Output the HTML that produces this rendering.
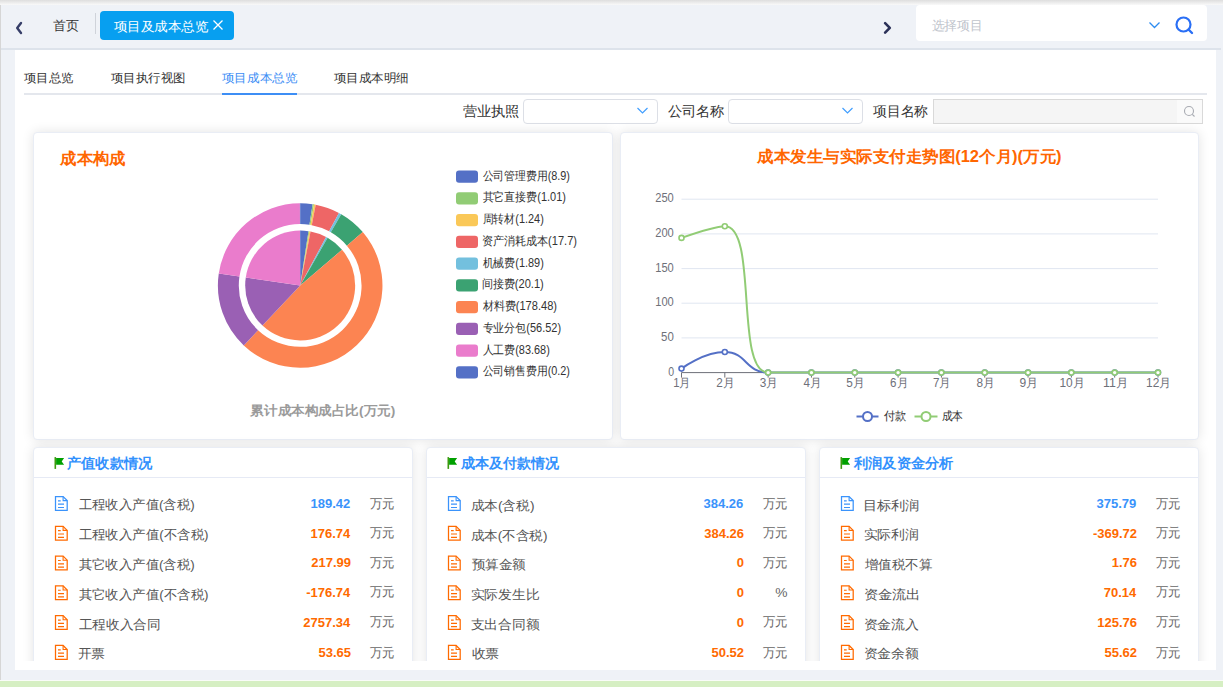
<!DOCTYPE html>
<html><head><meta charset="utf-8">
<style>
*{margin:0;padding:0;box-sizing:border-box}
html,body{width:1223px;height:687px;overflow:hidden;background:#eff2f7;font-family:"Liberation Sans",sans-serif;color:#333}
.abs{position:absolute}
#topshade{position:absolute;left:0;top:0;width:1223px;height:5px;background:linear-gradient(#dedede,#f9f9f9)}
#lborder{position:absolute;left:0;top:5px;width:1px;height:675px;background:#d6d6d6}
#hline{position:absolute;left:1px;top:48px;width:1220px;height:2px;background:#dde3eb}
#content{position:absolute;left:15px;top:50px;width:1201px;height:620px;background:#fff;overflow:hidden}
#clip{position:absolute;left:0;top:0;width:1201px;height:611px;overflow:hidden}
#green{position:absolute;left:0;top:681px;width:1223px;height:6px;background:#d6efc3}
#gline{position:absolute;left:0;top:680px;width:1223px;height:1px;background:#fafcf8}
.tab{position:absolute;top:11px;left:100px;width:134px;height:29px;background:#079ff0;border-radius:4px}
.charts{position:absolute;left:0;top:0}
.card{position:absolute;background:#fff;border:1px solid #e9edf5;border-radius:4px;box-shadow:0 0 12px rgba(0,0,0,0.11)}
.bcard{position:absolute;top:397px;width:380px;height:260px;background:#fff;border:1px solid #e9edf5;border-radius:4px;box-shadow:0 0 12px rgba(0,0,0,0.11)}
.bhead{position:absolute;left:0;top:0;width:378px;height:30px;border-bottom:1px solid #e6eaf5}
</style></head><body>
<div id="topshade"></div>
<div id="lborder"></div>
<div class="abs" style="left:95px;top:13px;width:1px;height:21px;background:#cfd3da"></div>
<div class="tab"></div>
<div class="abs" style="left:916px;top:5px;width:291px;height:36px;background:#fff;border-radius:4px"></div>
<div id="hline"></div>
<div id="content">
 <div class="abs" style="left:9px;top:43px;width:1183px;height:2px;background:#e4e7ed"></div>
 <div class="abs" style="left:207px;top:43px;width:75px;height:2px;background:#3d8ef5"></div>
 <div class="abs" style="left:508px;top:49px;width:135px;height:25px;border:1px solid #dcdfe6;border-radius:4px;background:#fff"></div>
 <div class="abs" style="left:713px;top:49px;width:135px;height:25px;border:1px solid #dcdfe6;border-radius:4px;background:#fff"></div>
 <div class="abs" style="left:918px;top:49px;width:270px;height:25px;border:1px solid #d9d9d9;background:#f5f5f5"></div>
 <div class="abs" style="left:1162px;top:50px;width:25px;height:23px;background:#fafafa"></div>
 <div id="clip">
 <div class="card" style="left:18px;top:82px;width:580px;height:308px"></div>
 <div class="card" style="left:605px;top:82px;width:579px;height:308px"></div>
 <div class="bcard" style="left:18px"><div class="bhead"></div></div>
 <div class="bcard" style="left:411px"><div class="bhead"></div></div>
 <div class="bcard" style="left:804px"><div class="bhead"></div></div>
 </div>
</div>
<svg class="charts" width="1223" height="687" viewBox="0 0 1223 687">
<defs><clipPath id="bc"><rect x="0" y="0" width="1223" height="661"/></clipPath></defs>
<g><path d="M300.20,285.50L300.20,230.50A55,55 0 0 1 308.49,231.13Z" fill="#5470c6"/>
<path d="M300.20,285.50L308.49,231.13A55,55 0 0 1 309.42,231.28Z" fill="#91cc75"/>
<path d="M300.20,285.50L309.42,231.28A55,55 0 0 1 310.56,231.48Z" fill="#fac858"/>
<path d="M300.20,285.50L310.56,231.48A55,55 0 0 1 326.10,236.98Z" fill="#ee6666"/>
<path d="M300.20,285.50L326.10,236.98A55,55 0 0 1 327.64,237.84Z" fill="#73c0de"/>
<path d="M300.20,285.50L327.64,237.84A55,55 0 0 1 342.02,249.78Z" fill="#3ba272"/>
<path d="M300.20,285.50L342.02,249.78A55,55 0 0 1 262.49,325.53Z" fill="#fc8452"/>
<path d="M300.20,285.50L262.49,325.53A55,55 0 0 1 245.78,277.54Z" fill="#9a60b4"/>
<path d="M300.20,285.50L245.78,277.54A55,55 0 0 1 300.01,230.50Z" fill="#ea7ccc"/>
<path d="M300.20,285.50L300.01,230.50A55,55 0 0 1 300.20,230.50Z" fill="#5470c6"/>
<path d="M300.20,203.20A82.3,82.3 0 0 1 312.60,204.14L309.45,224.80A61.4,61.4 0 0 0 300.20,224.10Z" fill="#5470c6"/>
<path d="M312.60,204.14A82.3,82.3 0 0 1 314.00,204.36L310.49,224.97A61.4,61.4 0 0 0 309.45,224.80Z" fill="#91cc75"/>
<path d="M314.00,204.36A82.3,82.3 0 0 1 315.70,204.67L311.77,225.20A61.4,61.4 0 0 0 310.49,224.97Z" fill="#fac858"/>
<path d="M315.70,204.67A82.3,82.3 0 0 1 338.95,212.90L329.11,231.33A61.4,61.4 0 0 0 311.77,225.20Z" fill="#ee6666"/>
<path d="M338.95,212.90A82.3,82.3 0 0 1 341.27,214.18L330.84,232.29A61.4,61.4 0 0 0 329.11,231.33Z" fill="#73c0de"/>
<path d="M341.27,214.18A82.3,82.3 0 0 1 362.78,232.05L346.89,245.63A61.4,61.4 0 0 0 330.84,232.29Z" fill="#3ba272"/>
<path d="M362.78,232.05A82.3,82.3 0 0 1 243.77,345.40L258.10,330.19A61.4,61.4 0 0 0 346.89,245.63Z" fill="#fc8452"/>
<path d="M243.77,345.40A82.3,82.3 0 0 1 218.77,273.58L239.45,276.61A61.4,61.4 0 0 0 258.10,330.19Z" fill="#9a60b4"/>
<path d="M218.77,273.58A82.3,82.3 0 0 1 299.92,203.20L299.99,224.10A61.4,61.4 0 0 0 239.45,276.61Z" fill="#ea7ccc"/>
<path d="M299.92,203.20A82.3,82.3 0 0 1 300.20,203.20L300.20,224.10A61.4,61.4 0 0 0 299.99,224.10Z" fill="#5470c6"/>
</g>
<rect x="456" y="170.60" width="22" height="12.2" rx="3" fill="#5470c6"/><rect x="456" y="192.35" width="22" height="12.2" rx="3" fill="#91cc75"/><rect x="456" y="214.10" width="22" height="12.2" rx="3" fill="#fac858"/><rect x="456" y="235.85" width="22" height="12.2" rx="3" fill="#ee6666"/><rect x="456" y="257.60" width="22" height="12.2" rx="3" fill="#73c0de"/><rect x="456" y="279.35" width="22" height="12.2" rx="3" fill="#3ba272"/><rect x="456" y="301.10" width="22" height="12.2" rx="3" fill="#fc8452"/><rect x="456" y="322.85" width="22" height="12.2" rx="3" fill="#9a60b4"/><rect x="456" y="344.60" width="22" height="12.2" rx="3" fill="#ea7ccc"/><rect x="456" y="366.35" width="22" height="12.2" rx="3" fill="#5470c6"/>
<line x1="681.5" x2="1158" y1="337.9" y2="337.9" stroke="#e0e6f1" stroke-width="1"/><line x1="681.5" x2="1158" y1="303.2" y2="303.2" stroke="#e0e6f1" stroke-width="1"/><line x1="681.5" x2="1158" y1="268.6" y2="268.6" stroke="#e0e6f1" stroke-width="1"/><line x1="681.5" x2="1158" y1="233.9" y2="233.9" stroke="#e0e6f1" stroke-width="1"/><line x1="681.5" x2="1158" y1="199.2" y2="199.2" stroke="#e0e6f1" stroke-width="1"/>
<line x1="681.5" x2="1158" y1="372.6" y2="372.6" stroke="#6e7079" stroke-width="1"/>
<line x1="681.50" x2="681.50" y1="372.6" y2="377.6" stroke="#6e7079"/><line x1="724.82" x2="724.82" y1="372.6" y2="377.6" stroke="#6e7079"/><line x1="768.14" x2="768.14" y1="372.6" y2="377.6" stroke="#6e7079"/><line x1="811.45" x2="811.45" y1="372.6" y2="377.6" stroke="#6e7079"/><line x1="854.77" x2="854.77" y1="372.6" y2="377.6" stroke="#6e7079"/><line x1="898.09" x2="898.09" y1="372.6" y2="377.6" stroke="#6e7079"/><line x1="941.41" x2="941.41" y1="372.6" y2="377.6" stroke="#6e7079"/><line x1="984.73" x2="984.73" y1="372.6" y2="377.6" stroke="#6e7079"/><line x1="1028.05" x2="1028.05" y1="372.6" y2="377.6" stroke="#6e7079"/><line x1="1071.36" x2="1071.36" y1="372.6" y2="377.6" stroke="#6e7079"/><line x1="1114.68" x2="1114.68" y1="372.6" y2="377.6" stroke="#6e7079"/><line x1="1158.00" x2="1158.00" y1="372.6" y2="377.6" stroke="#6e7079"/>
<path d="M681.50,368.58C681.50,368.58 703.52,352.07 724.82,352.07C746.84,352.07 745.38,372.60 768.14,372.60C788.70,372.60 789.80,372.60 811.45,372.60C833.11,372.60 833.11,372.60 854.77,372.60C876.43,372.60 876.43,372.60 898.09,372.60C919.75,372.60 919.75,372.60 941.41,372.60C963.07,372.60 963.07,372.60 984.73,372.60C1006.39,372.60 1006.39,372.60 1028.05,372.60C1049.70,372.60 1049.70,372.60 1071.36,372.60C1093.02,372.60 1093.02,372.60 1114.68,372.60C1136.34,372.60 1158.00,372.60 1158.00,372.60" fill="none" stroke="#5470c6" stroke-width="2"/>
<circle cx="681.50" cy="368.58" r="2.5" fill="#fff" stroke="#5470c6" stroke-width="1.6"/><circle cx="724.82" cy="352.07" r="2.5" fill="#fff" stroke="#5470c6" stroke-width="1.6"/><circle cx="768.14" cy="372.60" r="2.5" fill="#fff" stroke="#5470c6" stroke-width="1.6"/><circle cx="811.45" cy="372.60" r="2.5" fill="#fff" stroke="#5470c6" stroke-width="1.6"/><circle cx="854.77" cy="372.60" r="2.5" fill="#fff" stroke="#5470c6" stroke-width="1.6"/><circle cx="898.09" cy="372.60" r="2.5" fill="#fff" stroke="#5470c6" stroke-width="1.6"/><circle cx="941.41" cy="372.60" r="2.5" fill="#fff" stroke="#5470c6" stroke-width="1.6"/><circle cx="984.73" cy="372.60" r="2.5" fill="#fff" stroke="#5470c6" stroke-width="1.6"/><circle cx="1028.05" cy="372.60" r="2.5" fill="#fff" stroke="#5470c6" stroke-width="1.6"/><circle cx="1071.36" cy="372.60" r="2.5" fill="#fff" stroke="#5470c6" stroke-width="1.6"/><circle cx="1114.68" cy="372.60" r="2.5" fill="#fff" stroke="#5470c6" stroke-width="1.6"/><circle cx="1158.00" cy="372.60" r="2.5" fill="#fff" stroke="#5470c6" stroke-width="1.6"/>
<path d="M681.50,237.90C681.50,237.90 714.98,226.25 724.82,226.25C758.30,226.25 734.39,372.60 768.14,372.60C777.71,372.60 789.80,372.60 811.45,372.60C833.11,372.60 833.11,372.60 854.77,372.60C876.43,372.60 876.43,372.60 898.09,372.60C919.75,372.60 919.75,372.60 941.41,372.60C963.07,372.60 963.07,372.60 984.73,372.60C1006.39,372.60 1006.39,372.60 1028.05,372.60C1049.70,372.60 1049.70,372.60 1071.36,372.60C1093.02,372.60 1093.02,372.60 1114.68,372.60C1136.34,372.60 1158.00,372.60 1158.00,372.60" fill="none" stroke="#91cc75" stroke-width="2"/>
<circle cx="681.50" cy="237.90" r="2.5" fill="#fff" stroke="#91cc75" stroke-width="1.6"/><circle cx="724.82" cy="226.25" r="2.5" fill="#fff" stroke="#91cc75" stroke-width="1.6"/><circle cx="768.14" cy="372.60" r="2.5" fill="#fff" stroke="#91cc75" stroke-width="1.6"/><circle cx="811.45" cy="372.60" r="2.5" fill="#fff" stroke="#91cc75" stroke-width="1.6"/><circle cx="854.77" cy="372.60" r="2.5" fill="#fff" stroke="#91cc75" stroke-width="1.6"/><circle cx="898.09" cy="372.60" r="2.5" fill="#fff" stroke="#91cc75" stroke-width="1.6"/><circle cx="941.41" cy="372.60" r="2.5" fill="#fff" stroke="#91cc75" stroke-width="1.6"/><circle cx="984.73" cy="372.60" r="2.5" fill="#fff" stroke="#91cc75" stroke-width="1.6"/><circle cx="1028.05" cy="372.60" r="2.5" fill="#fff" stroke="#91cc75" stroke-width="1.6"/><circle cx="1071.36" cy="372.60" r="2.5" fill="#fff" stroke="#91cc75" stroke-width="1.6"/><circle cx="1114.68" cy="372.60" r="2.5" fill="#fff" stroke="#91cc75" stroke-width="1.6"/><circle cx="1158.00" cy="372.60" r="2.5" fill="#fff" stroke="#91cc75" stroke-width="1.6"/>
<line x1="856.5" x2="878.5" y1="416.5" y2="416.5" stroke="#5470c6" stroke-width="2"/><circle cx="867.5" cy="416.5" r="4.5" fill="#fff" stroke="#5470c6" stroke-width="2"/>
<line x1="914.5" x2="937.5" y1="416.5" y2="416.5" stroke="#91cc75" stroke-width="2"/><circle cx="926" cy="416.5" r="4.5" fill="#fff" stroke="#91cc75" stroke-width="2"/>
<path d="M213.5,20.5L222.5,29.5M222.5,20.5L213.5,29.5" stroke="#fff" stroke-width="1.3"/>
<path d="M21,23L17.2,28L21,33" fill="none" stroke="#363e68" stroke-width="2.4" stroke-linecap="round" stroke-linejoin="round"/>
<path d="M885.1,23.2L889.8,27.9L885.1,32.6" fill="none" stroke="#2b3158" stroke-width="2.6" stroke-linecap="round" stroke-linejoin="round"/>
<path d="M1149.5,22.5L1154.5,27.5L1159.5,22.5" fill="none" stroke="#2d8cf0" stroke-width="1.3"/>
<circle cx="1183.5" cy="24.5" r="7" fill="none" stroke="#2a6ff5" stroke-width="2.2"/><path d="M1188.5,29.5L1192,33" stroke="#2a6ff5" stroke-width="2.4" stroke-linecap="round"/>
<path d="M637.5,108L642.5,113L647.5,108" fill="none" stroke="#409eff" stroke-width="1.2"/>
<path d="M842.5,108L847.5,113L852.5,108" fill="none" stroke="#409eff" stroke-width="1.2"/>
<circle cx="1189" cy="111" r="4.5" fill="none" stroke="#a8abb2" stroke-width="1.1"/><path d="M1192.3,114.3L1194.5,116.5" stroke="#a8abb2" stroke-width="1.1"/>
<g font-family="Liberation Sans, sans-serif"><text x="53.24" y="30.06" font-size="13" fill="#333" font-weight="normal" textLength="25.96" lengthAdjust="spacingAndGlyphs">首页</text><text x="113.50" y="30.55" font-size="13" fill="#fff" font-weight="normal" textLength="95.00" lengthAdjust="spacingAndGlyphs">项目及成本总览</text><text x="931.50" y="29.81" font-size="13" fill="#c0c4cc" font-weight="normal" textLength="51.40" lengthAdjust="spacingAndGlyphs">选择项目</text><text x="23.98" y="81.56" font-size="12" fill="#333" font-weight="normal" textLength="49.52" lengthAdjust="spacingAndGlyphs">项目总览</text><text x="110.72" y="81.56" font-size="12" fill="#333" font-weight="normal" textLength="74.82" lengthAdjust="spacingAndGlyphs">项目执行视图</text><text x="221.76" y="81.56" font-size="12" fill="#3d8ef5" font-weight="normal" textLength="75.52" lengthAdjust="spacingAndGlyphs">项目成本总览</text><text x="333.72" y="81.56" font-size="12" fill="#333" font-weight="normal" textLength="75.30" lengthAdjust="spacingAndGlyphs">项目成本明细</text><text x="462.72" y="115.79" font-size="14" fill="#333" font-weight="normal" textLength="57.04" lengthAdjust="spacingAndGlyphs">营业执照</text><text x="667.72" y="115.59" font-size="14" fill="#333" font-weight="normal" textLength="57.04" lengthAdjust="spacingAndGlyphs">公司名称</text><text x="872.76" y="115.59" font-size="14" fill="#333" font-weight="normal" textLength="55.52" lengthAdjust="spacingAndGlyphs">项目名称</text><text x="60.24" y="164.48" font-size="16" fill="#ff6600" font-weight="bold" textLength="65.48" lengthAdjust="spacingAndGlyphs">成本构成</text><text x="757.24" y="161.59" font-size="16" fill="#ff6600" font-weight="bold" textLength="304.26" lengthAdjust="spacingAndGlyphs">成本发生与实际支付走势图(12个月)(万元)</text><text x="250.46" y="414.53" font-size="13" fill="#9a9a9a" font-weight="bold" textLength="144.78" lengthAdjust="spacingAndGlyphs">累计成本构成占比(万元)</text><text x="482.50" y="179.80" font-size="12" fill="#333" font-weight="normal" textLength="87.48" lengthAdjust="spacingAndGlyphs">公司管理费用(8.9)</text><text x="482.50" y="201.30" font-size="12" fill="#333" font-weight="normal" textLength="83.48" lengthAdjust="spacingAndGlyphs">其它直接费(1.01)</text><text x="482.50" y="223.30" font-size="12" fill="#333" font-weight="normal" textLength="61.30" lengthAdjust="spacingAndGlyphs">周转材(1.24)</text><text x="481.50" y="244.80" font-size="12" fill="#333" font-weight="normal" textLength="95.52" lengthAdjust="spacingAndGlyphs">资产消耗成本(17.7)</text><text x="482.50" y="266.80" font-size="12" fill="#333" font-weight="normal" textLength="61.30" lengthAdjust="spacingAndGlyphs">机械费(1.89)</text><text x="481.50" y="288.30" font-size="12" fill="#333" font-weight="normal" textLength="62.30" lengthAdjust="spacingAndGlyphs">间接费(20.1)</text><text x="482.50" y="310.30" font-size="12" fill="#333" font-weight="normal" textLength="74.48" lengthAdjust="spacingAndGlyphs">材料费(178.48)</text><text x="482.50" y="331.80" font-size="12" fill="#333" font-weight="normal" textLength="78.56" lengthAdjust="spacingAndGlyphs">专业分包(56.52)</text><text x="482.50" y="353.80" font-size="12" fill="#333" font-weight="normal" textLength="67.30" lengthAdjust="spacingAndGlyphs">人工费(83.68)</text><text x="482.50" y="375.30" font-size="12" fill="#333" font-weight="normal" textLength="87.48" lengthAdjust="spacingAndGlyphs">公司销售费用(0.2)</text><text x="668.20" y="375.74" font-size="12" fill="#6e7079" font-weight="normal" textLength="5.86" lengthAdjust="spacingAndGlyphs">0</text><text x="661.02" y="340.55" font-size="12" fill="#6e7079" font-weight="normal" textLength="12.74" lengthAdjust="spacingAndGlyphs">50</text><text x="655.24" y="306.06" font-size="12" fill="#6e7079" font-weight="normal" textLength="18.52" lengthAdjust="spacingAndGlyphs">100</text><text x="655.24" y="271.56" font-size="12" fill="#6e7079" font-weight="normal" textLength="18.52" lengthAdjust="spacingAndGlyphs">150</text><text x="655.24" y="236.67" font-size="12" fill="#6e7079" font-weight="normal" textLength="18.52" lengthAdjust="spacingAndGlyphs">200</text><text x="655.24" y="202.18" font-size="12" fill="#6e7079" font-weight="normal" textLength="18.52" lengthAdjust="spacingAndGlyphs">250</text><text x="673.20" y="387.32" font-size="12" fill="#6e7079" font-weight="normal" textLength="17.60" lengthAdjust="spacingAndGlyphs">1月</text><text x="716.31" y="387.32" font-size="12" fill="#6e7079" font-weight="normal" textLength="18.30" lengthAdjust="spacingAndGlyphs">2月</text><text x="759.82" y="387.32" font-size="12" fill="#6e7079" font-weight="normal" textLength="18.30" lengthAdjust="spacingAndGlyphs">3月</text><text x="803.48" y="387.32" font-size="12" fill="#6e7079" font-weight="normal" textLength="18.00" lengthAdjust="spacingAndGlyphs">4月</text><text x="846.29" y="387.32" font-size="12" fill="#6e7079" font-weight="normal" textLength="18.30" lengthAdjust="spacingAndGlyphs">5月</text><text x="890.10" y="387.32" font-size="12" fill="#6e7079" font-weight="normal" textLength="18.00" lengthAdjust="spacingAndGlyphs">6月</text><text x="932.90" y="387.32" font-size="12" fill="#6e7079" font-weight="normal" textLength="18.00" lengthAdjust="spacingAndGlyphs">7月</text><text x="976.41" y="387.32" font-size="12" fill="#6e7079" font-weight="normal" textLength="18.30" lengthAdjust="spacingAndGlyphs">8月</text><text x="1019.52" y="387.32" font-size="12" fill="#6e7079" font-weight="normal" textLength="18.70" lengthAdjust="spacingAndGlyphs">9月</text><text x="1059.42" y="387.32" font-size="12" fill="#6e7079" font-weight="normal" textLength="25.22" lengthAdjust="spacingAndGlyphs">10月</text><text x="1102.93" y="387.32" font-size="12" fill="#6e7079" font-weight="normal" textLength="25.22" lengthAdjust="spacingAndGlyphs">11月</text><text x="1146.04" y="387.32" font-size="12" fill="#6e7079" font-weight="normal" textLength="25.22" lengthAdjust="spacingAndGlyphs">12月</text><text x="883.50" y="419.98" font-size="12" fill="#333" font-weight="normal" textLength="22.52" lengthAdjust="spacingAndGlyphs">付款</text><text x="941.76" y="420.48" font-size="12" fill="#333" font-weight="normal" textLength="21.48" lengthAdjust="spacingAndGlyphs">成本</text></g>
<g clip-path="url(#bc)" font-family="Liberation Sans, sans-serif"><g transform="translate(54.5,457.1)"><rect x="0" y="0" width="1.6" height="11.8" fill="#3f9a10"/><path d="M1.6,0.9H9.6L7.2,4.3L9.6,7.7H1.6Z" fill="#00a000"/></g><g transform="translate(54,495.0)"><path d="M1.5,1.5H9.1L13.2,5.6V15.3H1.5Z" fill="none" stroke="#3a93fb" stroke-width="1.25"/><path d="M9.1,1.5V5.6H13.2" fill="none" stroke="#3a93fb" stroke-width="1.1"/><path d="M4,5.9H6.7M4,9.2H10M4,12.5H10" stroke="#3a93fb" stroke-width="1.2"/></g><g transform="translate(54,524.79)"><path d="M1.5,1.5H9.1L13.2,5.6V15.3H1.5Z" fill="none" stroke="#ff6a00" stroke-width="1.25"/><path d="M9.1,1.5V5.6H13.2" fill="none" stroke="#ff6a00" stroke-width="1.1"/><path d="M4,5.9H6.7M4,9.2H10M4,12.5H10" stroke="#ff6a00" stroke-width="1.2"/></g><g transform="translate(54,554.58)"><path d="M1.5,1.5H9.1L13.2,5.6V15.3H1.5Z" fill="none" stroke="#ff6a00" stroke-width="1.25"/><path d="M9.1,1.5V5.6H13.2" fill="none" stroke="#ff6a00" stroke-width="1.1"/><path d="M4,5.9H6.7M4,9.2H10M4,12.5H10" stroke="#ff6a00" stroke-width="1.2"/></g><g transform="translate(54,584.37)"><path d="M1.5,1.5H9.1L13.2,5.6V15.3H1.5Z" fill="none" stroke="#ff6a00" stroke-width="1.25"/><path d="M9.1,1.5V5.6H13.2" fill="none" stroke="#ff6a00" stroke-width="1.1"/><path d="M4,5.9H6.7M4,9.2H10M4,12.5H10" stroke="#ff6a00" stroke-width="1.2"/></g><g transform="translate(54,614.16)"><path d="M1.5,1.5H9.1L13.2,5.6V15.3H1.5Z" fill="none" stroke="#ff6a00" stroke-width="1.25"/><path d="M9.1,1.5V5.6H13.2" fill="none" stroke="#ff6a00" stroke-width="1.1"/><path d="M4,5.9H6.7M4,9.2H10M4,12.5H10" stroke="#ff6a00" stroke-width="1.2"/></g><g transform="translate(54,643.95)"><path d="M1.5,1.5H9.1L13.2,5.6V15.3H1.5Z" fill="none" stroke="#ff6a00" stroke-width="1.25"/><path d="M9.1,1.5V5.6H13.2" fill="none" stroke="#ff6a00" stroke-width="1.1"/><path d="M4,5.9H6.7M4,9.2H10M4,12.5H10" stroke="#ff6a00" stroke-width="1.2"/></g><g transform="translate(447.5,457.1)"><rect x="0" y="0" width="1.6" height="11.8" fill="#3f9a10"/><path d="M1.6,0.9H9.6L7.2,4.3L9.6,7.7H1.6Z" fill="#00a000"/></g><g transform="translate(447,495.0)"><path d="M1.5,1.5H9.1L13.2,5.6V15.3H1.5Z" fill="none" stroke="#3a93fb" stroke-width="1.25"/><path d="M9.1,1.5V5.6H13.2" fill="none" stroke="#3a93fb" stroke-width="1.1"/><path d="M4,5.9H6.7M4,9.2H10M4,12.5H10" stroke="#3a93fb" stroke-width="1.2"/></g><g transform="translate(447,524.79)"><path d="M1.5,1.5H9.1L13.2,5.6V15.3H1.5Z" fill="none" stroke="#ff6a00" stroke-width="1.25"/><path d="M9.1,1.5V5.6H13.2" fill="none" stroke="#ff6a00" stroke-width="1.1"/><path d="M4,5.9H6.7M4,9.2H10M4,12.5H10" stroke="#ff6a00" stroke-width="1.2"/></g><g transform="translate(447,554.58)"><path d="M1.5,1.5H9.1L13.2,5.6V15.3H1.5Z" fill="none" stroke="#ff6a00" stroke-width="1.25"/><path d="M9.1,1.5V5.6H13.2" fill="none" stroke="#ff6a00" stroke-width="1.1"/><path d="M4,5.9H6.7M4,9.2H10M4,12.5H10" stroke="#ff6a00" stroke-width="1.2"/></g><g transform="translate(447,584.37)"><path d="M1.5,1.5H9.1L13.2,5.6V15.3H1.5Z" fill="none" stroke="#ff6a00" stroke-width="1.25"/><path d="M9.1,1.5V5.6H13.2" fill="none" stroke="#ff6a00" stroke-width="1.1"/><path d="M4,5.9H6.7M4,9.2H10M4,12.5H10" stroke="#ff6a00" stroke-width="1.2"/></g><g transform="translate(447,614.16)"><path d="M1.5,1.5H9.1L13.2,5.6V15.3H1.5Z" fill="none" stroke="#ff6a00" stroke-width="1.25"/><path d="M9.1,1.5V5.6H13.2" fill="none" stroke="#ff6a00" stroke-width="1.1"/><path d="M4,5.9H6.7M4,9.2H10M4,12.5H10" stroke="#ff6a00" stroke-width="1.2"/></g><g transform="translate(447,643.95)"><path d="M1.5,1.5H9.1L13.2,5.6V15.3H1.5Z" fill="none" stroke="#ff6a00" stroke-width="1.25"/><path d="M9.1,1.5V5.6H13.2" fill="none" stroke="#ff6a00" stroke-width="1.1"/><path d="M4,5.9H6.7M4,9.2H10M4,12.5H10" stroke="#ff6a00" stroke-width="1.2"/></g><g transform="translate(840.5,457.1)"><rect x="0" y="0" width="1.6" height="11.8" fill="#3f9a10"/><path d="M1.6,0.9H9.6L7.2,4.3L9.6,7.7H1.6Z" fill="#00a000"/></g><g transform="translate(840,495.0)"><path d="M1.5,1.5H9.1L13.2,5.6V15.3H1.5Z" fill="none" stroke="#3a93fb" stroke-width="1.25"/><path d="M9.1,1.5V5.6H13.2" fill="none" stroke="#3a93fb" stroke-width="1.1"/><path d="M4,5.9H6.7M4,9.2H10M4,12.5H10" stroke="#3a93fb" stroke-width="1.2"/></g><g transform="translate(840,524.79)"><path d="M1.5,1.5H9.1L13.2,5.6V15.3H1.5Z" fill="none" stroke="#ff6a00" stroke-width="1.25"/><path d="M9.1,1.5V5.6H13.2" fill="none" stroke="#ff6a00" stroke-width="1.1"/><path d="M4,5.9H6.7M4,9.2H10M4,12.5H10" stroke="#ff6a00" stroke-width="1.2"/></g><g transform="translate(840,554.58)"><path d="M1.5,1.5H9.1L13.2,5.6V15.3H1.5Z" fill="none" stroke="#ff6a00" stroke-width="1.25"/><path d="M9.1,1.5V5.6H13.2" fill="none" stroke="#ff6a00" stroke-width="1.1"/><path d="M4,5.9H6.7M4,9.2H10M4,12.5H10" stroke="#ff6a00" stroke-width="1.2"/></g><g transform="translate(840,584.37)"><path d="M1.5,1.5H9.1L13.2,5.6V15.3H1.5Z" fill="none" stroke="#ff6a00" stroke-width="1.25"/><path d="M9.1,1.5V5.6H13.2" fill="none" stroke="#ff6a00" stroke-width="1.1"/><path d="M4,5.9H6.7M4,9.2H10M4,12.5H10" stroke="#ff6a00" stroke-width="1.2"/></g><g transform="translate(840,614.16)"><path d="M1.5,1.5H9.1L13.2,5.6V15.3H1.5Z" fill="none" stroke="#ff6a00" stroke-width="1.25"/><path d="M9.1,1.5V5.6H13.2" fill="none" stroke="#ff6a00" stroke-width="1.1"/><path d="M4,5.9H6.7M4,9.2H10M4,12.5H10" stroke="#ff6a00" stroke-width="1.2"/></g><g transform="translate(840,643.95)"><path d="M1.5,1.5H9.1L13.2,5.6V15.3H1.5Z" fill="none" stroke="#ff6a00" stroke-width="1.25"/><path d="M9.1,1.5V5.6H13.2" fill="none" stroke="#ff6a00" stroke-width="1.1"/><path d="M4,5.9H6.7M4,9.2H10M4,12.5H10" stroke="#ff6a00" stroke-width="1.2"/></g><text x="66.98" y="467.63" font-size="14" fill="#3291fd" font-weight="bold" textLength="85.52" lengthAdjust="spacingAndGlyphs">产值收款情况</text><text x="78.50" y="509.28" font-size="13" fill="#555" font-weight="normal" textLength="116.30" lengthAdjust="spacingAndGlyphs">工程收入产值(含税)</text><text x="350.28" y="507.74" font-size="13" fill="#3a93fb" font-weight="bold" text-anchor="end">189.42</text><text x="369.50" y="507.54" font-size="13" fill="#666" font-weight="normal" textLength="24.74" lengthAdjust="spacingAndGlyphs">万元</text><text x="78.50" y="538.92" font-size="13" fill="#555" font-weight="normal" textLength="130.00" lengthAdjust="spacingAndGlyphs">工程收入产值(不含税)</text><text x="350.28" y="537.82" font-size="13" fill="#ff6a00" font-weight="bold" text-anchor="end">176.74</text><text x="369.50" y="536.92" font-size="13" fill="#666" font-weight="normal" textLength="24.74" lengthAdjust="spacingAndGlyphs">万元</text><text x="78.50" y="569.11" font-size="13" fill="#555" font-weight="normal" textLength="116.30" lengthAdjust="spacingAndGlyphs">其它收入产值(含税)</text><text x="350.98" y="567.19" font-size="13" fill="#ff6a00" font-weight="bold" text-anchor="end">217.99</text><text x="369.50" y="566.99" font-size="13" fill="#666" font-weight="normal" textLength="24.74" lengthAdjust="spacingAndGlyphs">万元</text><text x="78.50" y="598.95" font-size="13" fill="#555" font-weight="normal" textLength="130.00" lengthAdjust="spacingAndGlyphs">其它收入产值(不含税)</text><text x="350.28" y="597.27" font-size="13" fill="#ff6a00" font-weight="bold" text-anchor="end">-176.74</text><text x="369.50" y="596.37" font-size="13" fill="#666" font-weight="normal" textLength="24.74" lengthAdjust="spacingAndGlyphs">万元</text><text x="78.50" y="628.59" font-size="13" fill="#555" font-weight="normal" textLength="82.22" lengthAdjust="spacingAndGlyphs">工程收入合同</text><text x="350.28" y="627.34" font-size="13" fill="#ff6a00" font-weight="bold" text-anchor="end">2757.34</text><text x="369.50" y="626.44" font-size="13" fill="#666" font-weight="normal" textLength="24.74" lengthAdjust="spacingAndGlyphs">万元</text><text x="77.50" y="657.58" font-size="13" fill="#555" font-weight="normal" textLength="27.52" lengthAdjust="spacingAndGlyphs">开票</text><text x="350.98" y="656.72" font-size="13" fill="#ff6a00" font-weight="bold" text-anchor="end">53.65</text><text x="369.50" y="656.52" font-size="13" fill="#666" font-weight="normal" textLength="24.74" lengthAdjust="spacingAndGlyphs">万元</text><text x="460.98" y="467.63" font-size="14" fill="#3291fd" font-weight="bold" textLength="98.26" lengthAdjust="spacingAndGlyphs">成本及付款情况</text><text x="470.50" y="509.98" font-size="13" fill="#555" font-weight="normal" textLength="64.00" lengthAdjust="spacingAndGlyphs">成本(含税)</text><text x="743.28" y="507.74" font-size="13" fill="#3a93fb" font-weight="bold" text-anchor="end">384.26</text><text x="762.50" y="507.54" font-size="13" fill="#666" font-weight="normal" textLength="24.74" lengthAdjust="spacingAndGlyphs">万元</text><text x="470.50" y="539.62" font-size="13" fill="#555" font-weight="normal" textLength="77.00" lengthAdjust="spacingAndGlyphs">成本(不含税)</text><text x="743.98" y="537.82" font-size="13" fill="#ff6a00" font-weight="bold" text-anchor="end">384.26</text><text x="762.50" y="536.92" font-size="13" fill="#666" font-weight="normal" textLength="24.74" lengthAdjust="spacingAndGlyphs">万元</text><text x="471.50" y="568.91" font-size="13" fill="#555" font-weight="normal" textLength="54.52" lengthAdjust="spacingAndGlyphs">预算金额</text><text x="743.98" y="567.19" font-size="13" fill="#ff6a00" font-weight="bold" text-anchor="end">0</text><text x="762.50" y="566.99" font-size="13" fill="#666" font-weight="normal" textLength="24.74" lengthAdjust="spacingAndGlyphs">万元</text><text x="470.50" y="599.10" font-size="13" fill="#555" font-weight="normal" textLength="69.22" lengthAdjust="spacingAndGlyphs">实际发生比</text><text x="743.98" y="597.27" font-size="13" fill="#ff6a00" font-weight="bold" text-anchor="end">0</text><text x="775.24" y="597.07" font-size="13" fill="#666" font-weight="normal" textLength="12.26" lengthAdjust="spacingAndGlyphs">%</text><text x="470.50" y="629.29" font-size="13" fill="#555" font-weight="normal" textLength="69.22" lengthAdjust="spacingAndGlyphs">支出合同额</text><text x="743.98" y="627.34" font-size="13" fill="#ff6a00" font-weight="bold" text-anchor="end">0</text><text x="762.50" y="626.44" font-size="13" fill="#666" font-weight="normal" textLength="24.74" lengthAdjust="spacingAndGlyphs">万元</text><text x="471.50" y="657.58" font-size="13" fill="#555" font-weight="normal" textLength="27.92" lengthAdjust="spacingAndGlyphs">收票</text><text x="743.98" y="656.72" font-size="13" fill="#ff6a00" font-weight="bold" text-anchor="end">50.52</text><text x="762.50" y="656.52" font-size="13" fill="#666" font-weight="normal" textLength="24.74" lengthAdjust="spacingAndGlyphs">万元</text><text x="853.98" y="467.63" font-size="14" fill="#3291fd" font-weight="bold" textLength="99.56" lengthAdjust="spacingAndGlyphs">利润及资金分析</text><text x="862.50" y="509.63" font-size="13" fill="#555" font-weight="normal" textLength="57.22" lengthAdjust="spacingAndGlyphs">目标利润</text><text x="1136.28" y="507.74" font-size="13" fill="#3a93fb" font-weight="bold" text-anchor="end">375.79</text><text x="1155.50" y="507.54" font-size="13" fill="#666" font-weight="normal" textLength="24.74" lengthAdjust="spacingAndGlyphs">万元</text><text x="863.50" y="539.42" font-size="13" fill="#555" font-weight="normal" textLength="55.52" lengthAdjust="spacingAndGlyphs">实际利润</text><text x="1136.98" y="537.82" font-size="13" fill="#ff6a00" font-weight="bold" text-anchor="end">-369.72</text><text x="1155.50" y="536.92" font-size="13" fill="#666" font-weight="normal" textLength="24.74" lengthAdjust="spacingAndGlyphs">万元</text><text x="864.50" y="568.76" font-size="13" fill="#555" font-weight="normal" textLength="67.52" lengthAdjust="spacingAndGlyphs">增值税不算</text><text x="1136.98" y="567.19" font-size="13" fill="#ff6a00" font-weight="bold" text-anchor="end">1.76</text><text x="1155.50" y="566.99" font-size="13" fill="#666" font-weight="normal" textLength="24.74" lengthAdjust="spacingAndGlyphs">万元</text><text x="863.50" y="598.75" font-size="13" fill="#555" font-weight="normal" textLength="57.22" lengthAdjust="spacingAndGlyphs">资金流出</text><text x="1136.28" y="597.27" font-size="13" fill="#ff6a00" font-weight="bold" text-anchor="end">70.14</text><text x="1155.50" y="596.37" font-size="13" fill="#666" font-weight="normal" textLength="24.74" lengthAdjust="spacingAndGlyphs">万元</text><text x="863.50" y="628.59" font-size="13" fill="#555" font-weight="normal" textLength="55.52" lengthAdjust="spacingAndGlyphs">资金流入</text><text x="1136.98" y="627.34" font-size="13" fill="#ff6a00" font-weight="bold" text-anchor="end">125.76</text><text x="1155.50" y="626.44" font-size="13" fill="#666" font-weight="normal" textLength="24.74" lengthAdjust="spacingAndGlyphs">万元</text><text x="863.50" y="658.08" font-size="13" fill="#555" font-weight="normal" textLength="55.52" lengthAdjust="spacingAndGlyphs">资金余额</text><text x="1136.98" y="656.72" font-size="13" fill="#ff6a00" font-weight="bold" text-anchor="end">55.62</text><text x="1155.50" y="656.52" font-size="13" fill="#666" font-weight="normal" textLength="24.74" lengthAdjust="spacingAndGlyphs">万元</text></g>
</svg>
<div id="gline"></div>
<div id="green"></div>
</body></html>
